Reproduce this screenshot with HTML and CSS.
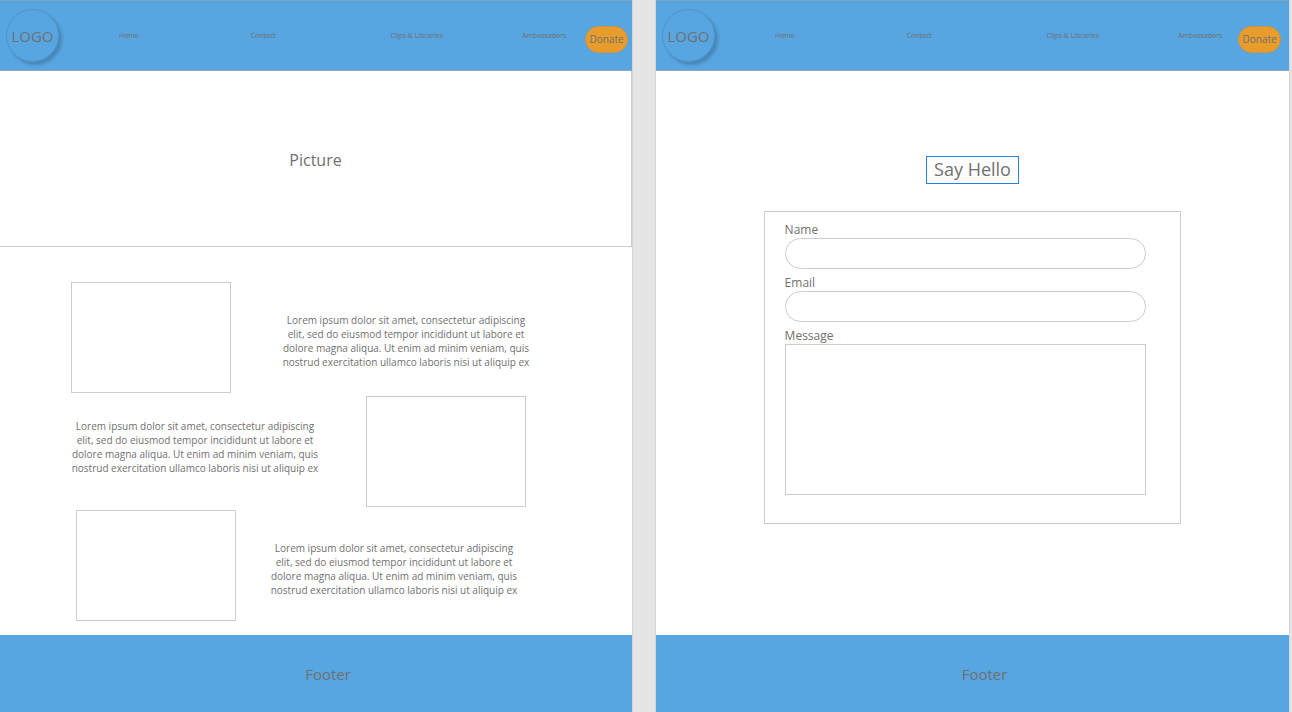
FILE: index.html
```html
<!DOCTYPE html>
<html lang="en">
<head>
<meta charset="utf-8">
<title>Site wireframes</title>
<link rel="stylesheet" href="styles.css">
</head>
<body>
<section class="board">
  <header class="header">
    <div class="logo">LOGO</div>
    <nav class="nav">
      <a href="#">Home</a>
      <a href="#">Contact</a>
      <a href="#">Clips &amp; Libraries</a>
      <a href="#">Ambassadors</a>
    </nav>
    <button class="donate" type="button">Donate</button>
  </header>
  <main class="main">
    <div class="hero">Picture</div>
    <div class="rows">
      <article class="row">
        <div class="thumb"></div>
        <p class="copy">Lorem ipsum dolor sit amet, consectetur adipiscing elit, sed do eiusmod tempor incididunt ut labore et dolore magna aliqua. Ut enim ad minim veniam, quis nostrud exercitation ullamco laboris nisi ut aliquip ex</p>
      </article>
      <article class="row row-reverse">
        <p class="copy">Lorem ipsum dolor sit amet, consectetur adipiscing elit, sed do eiusmod tempor incididunt ut labore et dolore magna aliqua. Ut enim ad minim veniam, quis nostrud exercitation ullamco laboris nisi ut aliquip ex</p>
        <div class="thumb"></div>
      </article>
      <article class="row row-near">
        <div class="thumb"></div>
        <p class="copy">Lorem ipsum dolor sit amet, consectetur adipiscing elit, sed do eiusmod tempor incididunt ut labore et dolore magna aliqua. Ut enim ad minim veniam, quis nostrud exercitation ullamco laboris nisi ut aliquip ex</p>
      </article>
    </div>
  </main>
  <footer class="footer">Footer</footer>
</section>
<section class="board">
  <header class="header header-inset">
    <div class="logo">LOGO</div>
    <nav class="nav">
      <a href="#">Home</a>
      <a href="#">Contact</a>
      <a href="#">Clips &amp; Libraries</a>
      <a href="#">Ambassadors</a>
    </nav>
    <button class="donate" type="button">Donate</button>
  </header>
  <main class="main contact">
    <h1 class="title">Say Hello</h1>
    <form class="form">
      <div class="field">
        <label for="name">Name</label>
        <input id="name" type="text">
      </div>
      <div class="field">
        <label for="email">Email</label>
        <input id="email" type="email">
      </div>
      <div class="field">
        <label for="message">Message</label>
        <textarea id="message"></textarea>
      </div>
    </form>
  </main>
  <footer class="footer">Footer</footer>
</section>
</body>
</html>
```
FILE: styles.css
```css
* {
  box-sizing: border-box;
}

body {
  margin: 0;
  padding-right: 3px;
  min-height: 100vh;
  display: grid;
  grid-template-columns: 632fr 633fr;
  gap: 24px;
  background: #e4e4e4;
  color: #707070;
  font-family: "Open Sans", "Noto Sans", sans-serif;
}

.board {
  display: flex;
  flex-direction: column;
  background: #fff;
  box-shadow: 0 0 0 1px #d6d6d6;
}

.header {
  display: flex;
  align-items: center;
  padding: 8px 4px 8px 6px;
  background: #57a5e1;
  border-top: 1px solid #7ba3c4;
  border-bottom: 1px solid #8fa6b8;
}

.header-inset {
  padding-right: 8px;
}

.logo {
  width: 53px;
  height: 53px;
  border: 1px solid #5395c8;
  border-radius: 50%;
  background: #57a5e1;
  box-shadow: 3px 3px 3px rgba(0, 0, 0, 0.18);
  font-size: 15px;
  line-height: 52px;
  text-align: center;
}

.nav {
  flex: 1;
  display: grid;
  grid-template-columns: 132fr 140fr 132fr 63fr;
  padding-left: 60px;
  font-size: 7px;
  line-height: 10px;
}

.header-inset .nav {
  grid-template-columns: 132fr 140fr 132fr 60fr;
}

.nav a {
  color: inherit;
  text-decoration: none;
  white-space: nowrap;
}

.donate {
  width: 43px;
  height: 27px;
  margin: 7px 0 0;
  padding: 0;
  border: 1px solid #c99642;
  border-radius: 14px;
  background: #e89c2b;
  color: inherit;
  font: inherit;
  font-size: 10px;
}

.main {
  flex: 1;
}

.hero {
  display: flex;
  align-items: center;
  justify-content: center;
  min-height: 176px;
  padding-top: 2px;
  border: 1px solid #ccc;
  border-width: 0 1px 1px 0;
  font-size: 16px;
}

.rows {
  display: grid;
  gap: 3px;
  padding: 35px 0 14px;
}

.row {
  display: flex;
  gap: 51px;
  padding-left: 71px;
}

.row-reverse {
  gap: 47px;
}

.row-near {
  gap: 34px;
  padding-left: 76px;
}

.thumb {
  width: 160px;
  height: 111px;
  border: 1px solid #ccc;
}

.copy {
  width: 248px;
  margin: 0;
  padding-top: 31px;
  font-size: 10px;
  line-height: 14px;
  text-align: center;
}

.row-reverse .copy {
  padding-top: 23px;
}

.footer {
  padding: 27px 0 26px 24px;
  background: #57a5e1;
  font-size: 15px;
  line-height: 24px;
  text-align: center;
}

.contact {
  display: flex;
  flex-direction: column;
  align-items: center;
  gap: 27px;
  padding-top: 85px;
}

.title {
  margin: 0;
  padding: 0 7px 2px;
  border: 1px solid #2680eb;
  font-size: 18px;
  font-weight: 400;
  line-height: 24px;
}

.form {
  display: grid;
  gap: 6px;
  width: 66%;
  padding: 10px 34px 28px 20px;
  border: 1px solid #ccc;
}

.field {
  display: grid;
  font-size: 12px;
  line-height: 16px;
}

.field input,
.field textarea {
  width: 100%;
  margin: 0;
  padding: 4px 14px;
  border: 1px solid #ccc;
  background: #fff;
  color: inherit;
  font: inherit;
}

.field input {
  height: 31px;
  border-radius: 16px;
}

.field textarea {
  height: 151px;
  resize: none;
}
```
